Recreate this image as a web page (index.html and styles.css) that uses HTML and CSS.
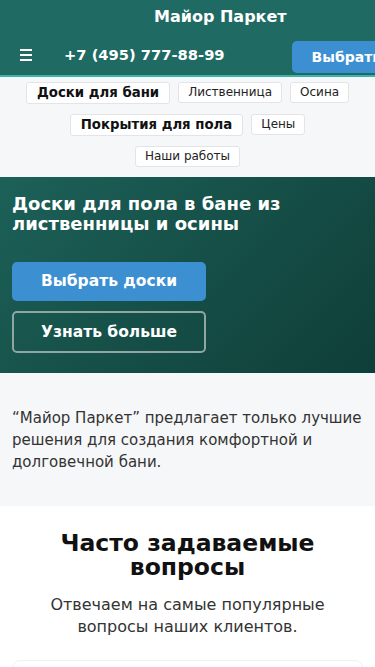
FILE: index.html
```html
<!DOCTYPE html>
<html lang="ru">
<head>
    <meta charset="UTF-8">
    <meta name="viewport" content="width=device-width, initial-scale=1.0">
    <title>Майор Паркет</title>
    <link rel="stylesheet" href="styles.css">
</head>
<body>

    <header class="site-header">
        <div class="brand">Майор Паркет</div>
        <div class="header-row">
            <a class="burger" href="#" aria-label="Меню">
                <svg width="12" height="12" viewBox="0 0 12 12">
                    <rect x="0" y="0" width="12" height="2" fill="#fff"/>
                    <rect x="0" y="5" width="12" height="2" fill="#fff"/>
                    <rect x="0" y="10" width="12" height="2" fill="#fff"/>
                </svg>
            </a>
            <a class="phone" href="#">+7 (495) 777-88-99</a>
            <a class="header-btn" href="#">Выбрать доски</a>
        </div>
    </header>

    <nav class="cats">
        <div class="cats-row">
            <a class="pill pill-main" href="#">Доски для бани</a>
            <a class="pill" href="#">Лиственница</a>
            <a class="pill" href="#">Осина</a>
        </div>
        <div class="cats-row">
            <a class="pill pill-main" href="#">Покрытия для пола</a>
            <a class="pill" href="#">Цены</a>
        </div>
        <div class="cats-row">
            <a class="pill" href="#">Наши работы</a>
        </div>
    </nav>

    <section class="hero">
        <h1>Доски для пола в бане из лиственницы и осины</h1>
        <a class="btn btn-blue" href="#">Выбрать доски</a>
        <a class="btn btn-outline" href="#">Узнать больше</a>
    </section>

    <section class="about">
        <p>“Майор Паркет” предлагает только лучшие решения для создания комфортной и долговечной бани.</p>
    </section>

    <section class="faq">
        <h2>Часто задаваемые вопросы</h2>
        <p class="faq-sub">Отвечаем на самые популярные вопросы наших клиентов.</p>
        <div class="faq-item"></div>
    </section>

</body>
</html>
```

FILE: styles.css
```css
body {
    margin: 0;
    font-family: 'DejaVu Sans', sans-serif;
    background-color: #ffffff;
    color: #333;
    overflow-x: hidden;
}

a {
    text-decoration: none;
}

.site-header {
    background-color: #1f6b63;
    border-bottom: 2px solid #3db3aa;
    color: #fff;
    overflow: hidden;
}

.brand {
    height: 34px;
    line-height: 34px;
    padding-left: 154px;
    font-size: 16px;
    font-weight: bold;
    white-space: nowrap;
}

.header-row {
    display: flex;
    align-items: center;
    height: 41px;
    padding-left: 20px;
    white-space: nowrap;
}

.burger {
    display: block;
    width: 12px;
    height: 12px;
    line-height: 0;
}

.phone {
    margin-left: 32px;
    color: #fff;
    font-size: 14.7px;
    font-weight: bold;
}

.header-btn {
    margin-left: 67px;
    margin-top: 4px;
    padding: 0 20px;
    height: 32px;
    line-height: 32px;
    background-color: #3c8fd1;
    border-radius: 5px;
    color: #fff;
    font-size: 14px;
    font-weight: bold;
    flex-shrink: 0;
}

.cats {
    background-color: #f6f7f9;
    padding: 5px 0 10px;
    display: flex;
    flex-direction: column;
    gap: 10px;
}

.cats-row {
    display: flex;
    justify-content: center;
    gap: 8px;
}

.pill {
    display: block;
    background: #fff;
    border: 1px solid #e2e4e8;
    border-radius: 3px;
    padding: 0 9px;
    height: 19px;
    line-height: 19px;
    font-size: 12px;
    color: #222;
}

.pill-main {
    font-weight: bold;
    font-size: 13.3px;
    padding: 0 10px;
    height: 20px;
    line-height: 20px;
    color: #111;
}

.hero {
    background: linear-gradient(135deg, #1c6158 0%, #0f3e38 100%);
    padding: 17px 12px 20px;
    display: flex;
    flex-direction: column;
    align-items: flex-start;
    box-shadow: 0 2px 2px rgba(0, 0, 0, 0.15);
}

.hero h1 {
    margin: 0 0 28px;
    color: #fff;
    font-size: 18px;
    line-height: 20px;
    font-weight: bold;
}

.btn {
    box-sizing: border-box;
    width: 194px;
    text-align: center;
    border-radius: 5px;
    color: #fff;
    font-weight: bold;
    font-size: 15.5px;
}

.btn-blue {
    background-color: #3c8fd1;
    height: 39px;
    line-height: 39px;
}

.btn-outline {
    margin-top: 10px;
    height: 42px;
    line-height: 38px;
    border: 2px solid #8fa6a2;
}

.about {
    background-color: #f6f7f9;
    padding: 34px 12px 33px;
}

.about p {
    margin: 0;
    font-size: 15px;
    line-height: 22px;
    color: #333;
}

.faq {
    background: #fff;
    padding: 25px 12px 0;
    text-align: center;
}

.faq h2 {
    margin: 0 auto 15px;
    max-width: 300px;
    font-size: 23.5px;
    line-height: 24px;
    color: #111;
}

.faq-sub {
    margin: 0 auto 22px;
    max-width: 300px;
    font-size: 16px;
    line-height: 22px;
    color: #333;
}

.faq-item {
    height: 60px;
    border: 1px solid #f0f1f3;
    border-radius: 8px;
}
```
